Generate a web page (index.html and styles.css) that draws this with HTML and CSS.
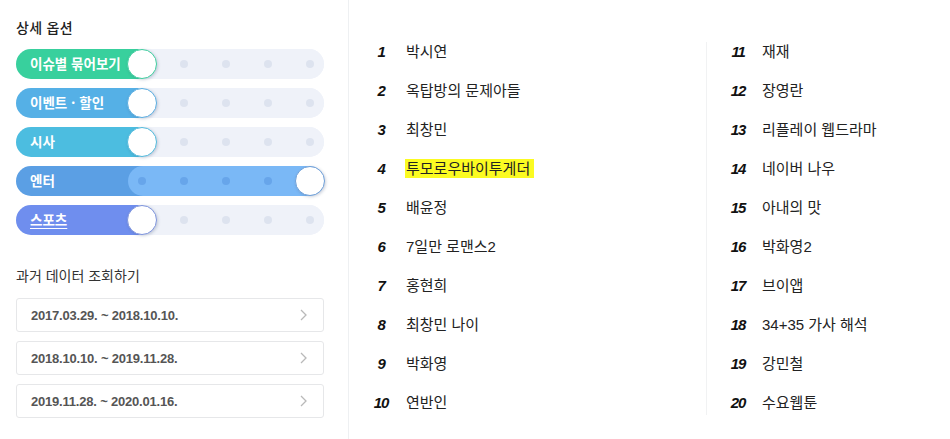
FILE: index.html
```html
<!DOCTYPE html>
<html lang="ko">
<head>
<meta charset="utf-8">
<title>실시간 검색어</title>
<link rel="stylesheet" href="styles.css">
</head>
<body>
<div class="page">
  <aside class="side">
    <h2 class="side-title side-title--bold">상세 옵션</h2>
    <div class="toggles">
      <div class="toggle toggle--issue">
        <span class="toggle-label">이슈별 묶어보기</span>
        <span class="track">
          <span class="slot"><span class="knob"></span></span>
          <span class="slot"><span class="dot"></span></span>
          <span class="slot"><span class="dot"></span></span>
          <span class="slot"><span class="dot"></span></span>
          <span class="slot"><span class="dot"></span></span>
        </span>
      </div>
      <div class="toggle toggle--event">
        <span class="toggle-label">이벤트 · 할인</span>
        <span class="track">
          <span class="slot"><span class="knob"></span></span>
          <span class="slot"><span class="dot"></span></span>
          <span class="slot"><span class="dot"></span></span>
          <span class="slot"><span class="dot"></span></span>
          <span class="slot"><span class="dot"></span></span>
        </span>
      </div>
      <div class="toggle toggle--news">
        <span class="toggle-label">시사</span>
        <span class="track">
          <span class="slot"><span class="knob"></span></span>
          <span class="slot"><span class="dot"></span></span>
          <span class="slot"><span class="dot"></span></span>
          <span class="slot"><span class="dot"></span></span>
          <span class="slot"><span class="dot"></span></span>
        </span>
      </div>
      <div class="toggle toggle--ent toggle--on">
        <span class="toggle-label">엔터</span>
        <span class="track">
          <span class="slot"><span class="dot"></span></span>
          <span class="slot"><span class="dot"></span></span>
          <span class="slot"><span class="dot"></span></span>
          <span class="slot"><span class="dot"></span></span>
          <span class="slot"><span class="knob"></span></span>
        </span>
      </div>
      <div class="toggle toggle--sports">
        <span class="toggle-label toggle-label--hover">스포츠</span>
        <span class="track">
          <span class="slot"><span class="knob"></span></span>
          <span class="slot"><span class="dot"></span></span>
          <span class="slot"><span class="dot"></span></span>
          <span class="slot"><span class="dot"></span></span>
          <span class="slot"><span class="dot"></span></span>
        </span>
      </div>
    </div>

    <h2 class="side-title side-title--past">과거 데이터 조회하기</h2>
    <div class="periods">
      <a class="period">2017.03.29. ~ 2018.10.10.<svg class="chev" width="7" height="12" viewBox="0 0 7 12"><polyline points="1,1 6,6 1,11" fill="none" stroke="#b9b9b9" stroke-width="1.3"/></svg></a>
      <a class="period">2018.10.10. ~ 2019.11.28.<svg class="chev" width="7" height="12" viewBox="0 0 7 12"><polyline points="1,1 6,6 1,11" fill="none" stroke="#b9b9b9" stroke-width="1.3"/></svg></a>
      <a class="period">2019.11.28. ~ 2020.01.16.<svg class="chev" width="7" height="12" viewBox="0 0 7 12"><polyline points="1,1 6,6 1,11" fill="none" stroke="#b9b9b9" stroke-width="1.3"/></svg></a>
    </div>
  </aside>

  <main class="ranks">
    <ol class="rank-col">
      <li class="rank"><span class="num">1</span><span class="kw">박시연</span></li>
      <li class="rank"><span class="num">2</span><span class="kw">옥탑방의 문제아들</span></li>
      <li class="rank"><span class="num">3</span><span class="kw">최창민</span></li>
      <li class="rank"><span class="num">4</span><span class="kw"><mark class="hl">투모로우바이투게더</mark></span></li>
      <li class="rank"><span class="num">5</span><span class="kw">배윤정</span></li>
      <li class="rank"><span class="num">6</span><span class="kw">7일만 로맨스2</span></li>
      <li class="rank"><span class="num">7</span><span class="kw">홍현희</span></li>
      <li class="rank"><span class="num">8</span><span class="kw">최창민 나이</span></li>
      <li class="rank"><span class="num">9</span><span class="kw">박화영</span></li>
      <li class="rank"><span class="num">10</span><span class="kw">연반인</span></li>
    </ol>
    <ol class="rank-col rank-col--second">
      <li class="rank"><span class="num">11</span><span class="kw">재재</span></li>
      <li class="rank"><span class="num">12</span><span class="kw">장영란</span></li>
      <li class="rank"><span class="num">13</span><span class="kw">리플레이 웹드라마</span></li>
      <li class="rank"><span class="num">14</span><span class="kw">네이버 나우</span></li>
      <li class="rank"><span class="num">15</span><span class="kw">아내의 맛</span></li>
      <li class="rank"><span class="num">16</span><span class="kw">박화영2</span></li>
      <li class="rank"><span class="num">17</span><span class="kw">브이앱</span></li>
      <li class="rank"><span class="num">18</span><span class="kw">34+35 가사 해석</span></li>
      <li class="rank"><span class="num">19</span><span class="kw">강민철</span></li>
      <li class="rank"><span class="num">20</span><span class="kw">수요웹툰</span></li>
    </ol>
  </main>
</div>
</body>
</html>
```

FILE: styles.css
```css
* { box-sizing: border-box; }

html, body {
  margin: 0;
  padding: 0;
  background: #fff;
}

body {
  font-family: "Liberation Sans", "Noto Sans CJK KR", sans-serif;
  color: #222;
  width: 950px;
  height: 439px;
  overflow: hidden;
}

.page {
  display: flex;
  height: 439px;
}

/* ---------- left side ---------- */
.side {
  width: 349px;
  flex: none;
  border-right: 1px solid #eef0f2;
  padding: 17px 0 0 16px;
}

.side-title {
  margin: 0;
  font-size: 14px;
  line-height: 20px;
  font-weight: 400;
  color: #222;
  font-family: "Noto Sans CJK KR", sans-serif;
}

.side-title--bold { font-weight: 500; letter-spacing: 0.3px; }

.side-title--past { margin-top: 30px; color: #333; }

.toggles {
  margin-top: 12px;
  display: flex;
  flex-direction: column;
  gap: 9px;
  width: 308px;
}

.toggle {
  display: flex;
  height: 30px;
  border-radius: 15px;
  background: #eff2f9;
}

.toggle-label {
  flex: none;
  width: 140px;
  height: 30px;
  border-radius: 15px 0 0 15px;
  padding-left: 14px;
  color: #fff;
  font-family: "Noto Sans CJK KR", sans-serif;
  font-size: 13.5px;
  font-weight: 700;
  line-height: 29px;
  white-space: nowrap;
}

.toggle-label--hover { text-decoration: underline; text-underline-offset: 3px; }

.toggle--issue .toggle-label { background: #38d09d; }
.toggle--event .toggle-label { background: #55b0e6; }
.toggle--news .toggle-label { background: #4cbde0; }
.toggle--ent .toggle-label { background: #5b9fe4; }
.toggle--sports .toggle-label { background: #6f8eee; }

.toggle--issue { --ring: #3fcf9f; }
.toggle--event { --ring: #5aaee2; }
.toggle--news { --ring: #52bbdd; }
.toggle--ent { --ring: #6e9fd8; }
.toggle--sports { --ring: #7e94dd; }

.track {
  flex: none;
  width: 196px;
  height: 30px;
  margin-left: -28px;
  border-radius: 15px;
  background: #eff2f9;
  display: flex;
  justify-content: space-between;
  align-items: center;
}

.toggle--on .track { background: #7ab8f6; }

.slot {
  width: 28px;
  height: 30px;
  display: flex;
  align-items: center;
  justify-content: center;
}

.dot {
  width: 8px;
  height: 8px;
  border-radius: 50%;
  background: #dde3ef;
}

.toggle--on .dot { background: #67a5ea; }

.knob {
  flex: none;
  width: 30px;
  height: 30px;
  border-radius: 50%;
  background: #fff;
  border: 1.5px solid var(--ring);
  box-shadow: 1px 1px 3px rgba(60, 80, 120, 0.25);
}

.periods {
  margin-top: 13px;
  display: flex;
  flex-direction: column;
  gap: 9px;
  width: 308px;
}

.period {
  display: flex;
  align-items: center;
  justify-content: space-between;
  height: 34px;
  border: 1px solid #e6e7e9;
  border-radius: 3px;
  padding: 0 16px 0 14px;
  font-family: "Liberation Sans", sans-serif;
  font-size: 13px;
  letter-spacing: -0.2px;
  font-weight: 700;
  color: #555;
}

.chev { flex: none; }

/* ---------- ranks ---------- */
.ranks {
  flex: 1;
  display: flex;
  padding-top: 42px;
}

.rank-col {
  list-style: none;
  margin: 0;
  padding: 0;
  width: 357px;
  height: 373px;
  display: flex;
  flex-direction: column;
  gap: 19px;
}

.rank-col--second {
  flex: 1;
  width: auto;
  border-left: 1px solid #f1f2f3;
}

.rank {
  display: flex;
  align-items: center;
  height: 20px;
  line-height: 20px;
}

.num {
  flex: none;
  width: 24px;
  margin-left: 20px;
  text-align: center;
  font-family: "Liberation Sans", sans-serif;
  font-style: italic;
  font-weight: 700;
  font-size: 15px;
  letter-spacing: -1.2px;
  color: #111;
}

.rank-col--second .num { margin-left: 19px; }

.kw {
  margin-left: 13px;
  font-size: 15px;
  color: #222;
  white-space: nowrap;
}

.rank-col--second .kw { margin-left: 12px; }

.hl {
  background: #fbfb22;
  color: #222;
  padding: 1px 4px 1px 1px;
  margin-left: -1px;
}
```
